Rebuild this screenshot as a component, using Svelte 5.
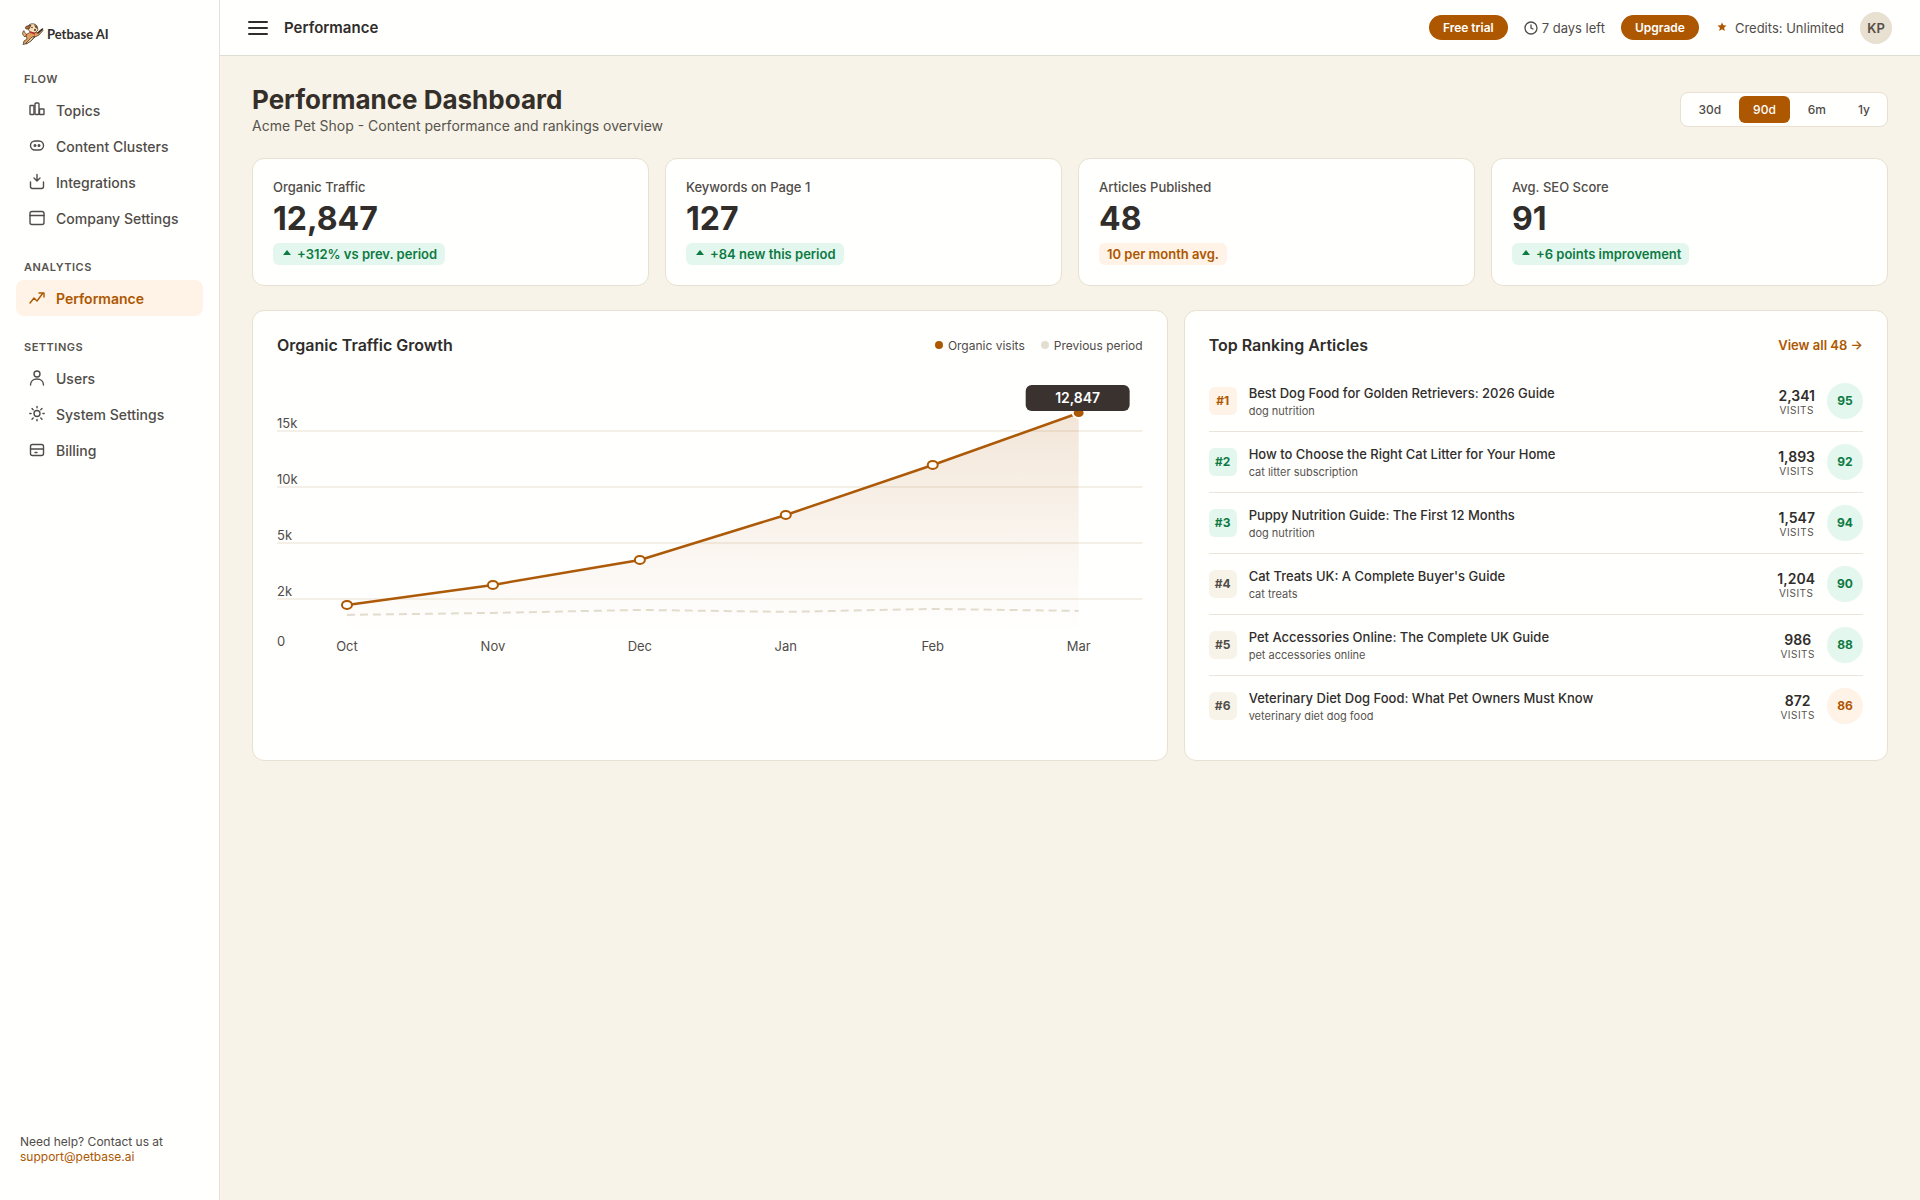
<script>
  let range = '90d';

  const ranges = ['30d', '90d', '6m', '1y'];

  const sections = [
    {
      title: 'FLOW',
      items: [
        { label: 'Topics', icon: 'topics' },
        { label: 'Content Clusters', icon: 'clusters' },
        { label: 'Integrations', icon: 'integrations' },
        { label: 'Company Settings', icon: 'company' }
      ]
    },
    {
      title: 'ANALYTICS',
      items: [{ label: 'Performance', icon: 'performance', active: true }]
    },
    {
      title: 'SETTINGS',
      items: [
        { label: 'Users', icon: 'users' },
        { label: 'System Settings', icon: 'system' },
        { label: 'Billing', icon: 'billing' }
      ]
    }
  ];

  const stats = [
    { label: 'Organic Traffic', value: '12,847', note: '+312% vs prev. period', up: true },
    { label: 'Keywords on Page 1', value: '127', note: '+84 new this period', up: true },
    { label: 'Articles Published', value: '48', note: '10 per month avg.', up: false },
    { label: 'Avg. SEO Score', value: '91', note: '+6 points improvement', up: true }
  ];

  const articles = [
    { title: 'Best Dog Food for Golden Retrievers: 2026 Guide', keyword: 'dog nutrition', visits: '2,341', score: 95, tone: 'orange' },
    { title: 'How to Choose the Right Cat Litter for Your Home', keyword: 'cat litter subscription', visits: '1,893', score: 92, tone: 'green' },
    { title: 'Puppy Nutrition Guide: The First 12 Months', keyword: 'dog nutrition', visits: '1,547', score: 94, tone: 'green' },
    { title: "Cat Treats UK: A Complete Buyer's Guide", keyword: 'cat treats', visits: '1,204', score: 90, tone: 'sand' },
    { title: 'Pet Accessories Online: The Complete UK Guide', keyword: 'pet accessories online', visits: '986', score: 88, tone: 'sand' },
    { title: 'Veterinary Diet Dog Food: What Pet Owners Must Know', keyword: 'veterinary diet dog food', visits: '872', score: 86, tone: 'sand' }
  ];

  const grid = [
    { label: '15k', y: 60 },
    { label: '10k', y: 116 },
    { label: '5k', y: 172 },
    { label: '2k', y: 228 }
  ];

  const points = [
    { month: 'Oct', x: 70, y: 234, prev: 244 },
    { month: 'Nov', x: 216, y: 214, prev: 242 },
    { month: 'Dec', x: 363, y: 189, prev: 239 },
    { month: 'Jan', x: 509, y: 144, prev: 241 },
    { month: 'Feb', x: 656, y: 94, prev: 238 },
    { month: 'Mar', x: 802, y: 42, prev: 240 }
  ];

  const line = points.map((p) => `${p.x},${p.y}`).join(' ');
  const prevLine = points.map((p) => `${p.x},${p.prev}`).join(' ');
  const area = `70,262 ${line} 802,262`;
</script>

<div class="app">
  <aside class="sidebar">
    <a class="logo" href="#home">
      <svg width="22" height="22" viewBox="0 0 22 22" stroke-width="0.7" stroke-linejoin="round" aria-hidden="true">
        <path d="M3 14C0 12 0 9 2 7.500 2.500 9 3 10.500 5 11.500z" fill="#e8ab66" stroke="#3c2a20" />
        <path d="M4 12C6 10 9 9 12 8L15 10 20 6 21 7.500 17 12 13 14 10 17 5 20.500 1 21.500 2 18 5 16z" fill="#e2a05c" stroke="#3c2a20" />
        <path d="M10 14 13 13 9 18 4 21 4 20z" fill="#f5dcb4" stroke="#3c2a20" />
        <path d="M16 10 20.500 6" stroke="#3c2a20" stroke-width="1.6" stroke-linecap="round" />
        <path d="M6 3C8 0 13 0 15 3L16 7 13 10 8 9 6 6z" fill="#f7deb6" stroke="#3c2a20" />
        <path d="M6 3C3 3 3 5 4 6L7 6 9 2z" fill="#b56b33" stroke="#3c2a20" />
        <path d="M12 1.500 15 3 16 6 13.500 5z" fill="#7d4a2b" />
        <path d="M8 9 13 11" stroke="#c62f2a" stroke-width="1.5" />
        <circle cx="10" cy="4.500" r="0.7" fill="#2d2420" />
        <circle cx="13" cy="7" r="0.9" fill="#2d2420" />
      </svg>
      <span>Petbase AI</span>
    </a>

    <nav>
      {#each sections as section}
        <section class="nav-section">
          <h2>{section.title}</h2>
          {#each section.items as item}
            <a class="nav-item" class:active={item.active} href="#{item.icon}">
              <svg width="18" height="18" viewBox="0 0 18 18" fill="none" stroke="currentColor" stroke-width="1.4" stroke-linecap="round" stroke-linejoin="round" aria-hidden="true">
                {#if item.icon === 'topics'}
                  <rect x="2" y="4.500" width="4" height="9" rx="0.5" />
                  <rect x="7" y="2" width="4" height="11.500" rx="1" />
                  <rect x="11.500" y="8" width="4.500" height="5.500" rx="0.5" />
                {:else if item.icon === 'clusters'}
                  <rect x="2.500" y="4" width="13" height="9" rx="4.500" />
                  <circle cx="7" cy="8.500" r="0.8" fill="currentColor" />
                  <circle cx="11" cy="8.500" r="0.8" fill="currentColor" />
                {:else if item.icon === 'integrations'}
                  <path d="M2.500 9v4.500a2 2 0 0 0 2 2h9a2 2 0 0 0 2-2V9M9 1.500v6M6 5l3 3 3-3" />
                {:else if item.icon === 'company'}
                  <rect x="2" y="2.500" width="14" height="13" rx="2" />
                  <path d="M2 6.500h14" />
                {:else if item.icon === 'performance'}
                  <path d="M2 14l4-5 3 3 6-8M11 4h5v4" />
                {:else if item.icon === 'users'}
                  <circle cx="9" cy="5" r="3" />
                  <path d="M2.500 16c0-4 3-6 6.500-6s6.500 2 6.500 6" />
                {:else if item.icon === 'system'}
                  <circle cx="9" cy="8.500" r="3" />
                  <path d="M9 1.500v1.300M9 14.500v1.300M1.800 8.500h1.300M14.900 8.500h1.300M4 3.500l1.200 1.200M12.800 13l1.200 1.200M14 3.500l-1.200 1.200M5.200 13L4 14.200" />
                {:else}
                  <rect x="2.500" y="3.500" width="13" height="11" rx="2" />
                  <path d="M2.500 8h13M7 11.500h2" />
                {/if}
              </svg>
              <span>{item.label}</span>
            </a>
          {/each}
        </section>
      {/each}
    </nav>

    <p class="help">
      Need help? Contact us at<br />
      <a href="mailto:support@petbase.ai">support@petbase.ai</a>
    </p>
  </aside>

  <div class="main">
    <header class="topbar">
      <button class="menu" aria-label="Toggle menu">
        <svg width="20" height="20" viewBox="0 0 20 20" stroke="currentColor" stroke-width="2" stroke-linecap="round">
          <path d="M1 4h18M1 10h18M1 16h18" />
        </svg>
      </button>
      <span class="page-name">Performance</span>
      <div class="account">
        <span class="pill">Free trial</span>
        <span class="meta">
          <svg width="14" height="14" viewBox="0 0 14 14" fill="none" stroke="currentColor" stroke-width="1.3" stroke-linecap="round" aria-hidden="true">
            <circle cx="7" cy="7" r="6" />
            <path d="M7 4v3l2 1" />
          </svg>
          7 days left
        </span>
        <button class="pill">Upgrade</button>
        <span class="meta">
          <svg width="16" height="16" viewBox="0 0 16 16" fill="#ad5700" aria-hidden="true">
            <path d="M7 2.500l1.300 2.700 3.200.3-2.400 2.200.7 3.300L7 9.300 4.200 11l.7-3.300-2.400-2.200 3.200-.3z" />
          </svg>
          Credits: Unlimited
        </span>
        <button class="avatar">KP</button>
      </div>
    </header>

    <main class="content">
      <div class="heading">
        <div>
          <h1>Performance Dashboard</h1>
          <p>Acme Pet Shop - Content performance and rankings overview</p>
        </div>
        <div class="ranges">
          {#each ranges as r}
            <button class:selected={range === r} on:click={() => (range = r)}>{r}</button>
          {/each}
        </div>
      </div>

      <div class="stats">
        {#each stats as stat}
          <div class="card stat">
            <span class="stat-label">{stat.label}</span>
            <strong>{stat.value}</strong>
            <span class="note" class:up={stat.up}>
              {#if stat.up}
                <svg width="14" height="12" viewBox="0 0 14 12" fill="currentColor" aria-hidden="true">
                  <path d="M6 2l4 5H2z" />
                </svg>
              {/if}
              {stat.note}
            </span>
          </div>
        {/each}
      </div>

      <div class="panels">
        <section class="card panel">
          <div class="panel-head">
            <h3>Organic Traffic Growth</h3>
            <div class="legend">
              <span><i class="dot"></i>Organic visits</span>
              <span><i class="dot prev"></i>Previous period</span>
            </div>
          </div>
          <svg class="chart" viewBox="0 0 866 300" role="img" aria-label="Organic traffic by month">
            <defs>
              <linearGradient id="fill" x1="0" y1="0" x2="0" y2="1">
                <stop offset="0" stop-color="#ad5700" stop-opacity="0.15" />
                <stop offset="1" stop-color="#ad5700" stop-opacity="0" />
              </linearGradient>
            </defs>
            {#each grid as g}
              <line x1="0" x2="866" y1={g.y} y2={g.y} class="gridline" />
              <text x="0" y={g.y - 3}>{g.label}</text>
            {/each}
            <text x="0" y="275">0</text>
            <polygon points={area} fill="url(#fill)" />
            <polyline points={prevLine} class="prev-line" />
            <polyline points={line} class="visits-line" />
            {#each points as p, i}
              {#if i < points.length - 1}
                <ellipse cx={p.x} cy={p.y} rx="5" ry="4" class="point" />
              {:else}
                <ellipse cx={p.x} cy={p.y} rx="6" ry="5" class="point last" />
              {/if}
              <text x={p.x} y="280" text-anchor="middle">{p.month}</text>
            {/each}
            <rect x="749" y="14" width="104" height="26" rx="6" fill="#3a322f" />
            <text x="801" y="32" text-anchor="middle" class="tip">12,847</text>
          </svg>
        </section>

        <section class="card panel">
          <div class="panel-head">
            <h3>Top Ranking Articles</h3>
            <a class="view-all" href="#articles">View all 48 →</a>
          </div>
          <ol class="articles">
            {#each articles as article, i}
              <li>
                <span class="rank {article.tone}">#{i + 1}</span>
                <div class="article">
                  <span class="article-title">{article.title}</span>
                  <span class="keyword">{article.keyword}</span>
                </div>
                <div class="visits">
                  <strong>{article.visits}</strong>
                  <span>VISITS</span>
                </div>
                <span class="score" class:fair={article.score < 88}>{article.score}</span>
              </li>
            {/each}
          </ol>
        </section>
      </div>
    </main>
  </div>
</div>

<style>
  :global(body) {
    background: #f8f3e8;
  }

  .app {
    display: flex;
    min-height: 100vh;
    font-family: Inter, "Liberation Sans", sans-serif;
    color: #302d2b;
  }

  .app * {
    box-sizing: border-box;
  }

  h1, h2, h3, p, ol {
    margin: 0;
    padding: 0;
  }

  a {
    color: inherit;
    text-decoration: none;
  }

  button {
    border: none;
    background: none;
    padding: 0;
    font: inherit;
    color: inherit;
    cursor: pointer;
  }

  svg {
    display: block;
    flex-shrink: 0;
  }

  .sidebar {
    display: flex;
    flex-direction: column;
    width: 220px;
    flex-shrink: 0;
    padding: 22px 16px 36px;
    background: #fffffe;
    border-right: 1px solid #e6e2d8;
  }

  .logo {
    display: flex;
    align-items: center;
    gap: 3px;
    height: 24px;
    margin-bottom: 24px;
    padding-left: 6px;
    font-family: Lato, sans-serif;
    font-size: 13px;
    font-weight: 700;
  }

  .nav-section {
    margin-bottom: 22px;
  }

  .nav-section h2 {
    padding-left: 8px;
    margin-bottom: 4px;
    font-size: 11px;
    line-height: 18px;
    font-weight: 600;
    letter-spacing: 0.5px;
    color: #57534e;
  }

  .nav-item {
    display: flex;
    align-items: center;
    gap: 10px;
    height: 36px;
    padding: 0 12px;
    border-radius: 8px;
    font-size: 14px;
    font-weight: 500;
    color: #504c48;
  }

  .nav-item.active {
    background: #fff2e6;
    color: #ad5700;
    font-weight: 600;
  }

  .help {
    margin-top: auto;
    padding-left: 4px;
    font-size: 12px;
    line-height: 15px;
    color: #504c48;
  }

  .help a {
    color: #ad5700;
  }

  .main {
    flex: 1;
    min-width: 0;
  }

  .topbar {
    display: flex;
    align-items: center;
    gap: 16px;
    height: 56px;
    padding: 0 28px;
    background: #fffffe;
    border-bottom: 1px solid #dfddd3;
  }

  .page-name {
    font-size: 15px;
    font-weight: 600;
  }

  .account {
    display: flex;
    align-items: center;
    gap: 16px;
    margin-left: auto;
  }

  .pill {
    padding: 0 14px;
    border-radius: 13px;
    background: #ad5700;
    color: #fff;
    font-size: 12px;
    line-height: 25px;
    font-weight: 600;
  }

  .meta {
    display: flex;
    align-items: center;
    gap: 4px;
    font-size: 13px;
    color: #504c48;
  }

  .avatar {
    width: 32px;
    height: 32px;
    border-radius: 50%;
    background: #e8e0d0;
    font-size: 13px;
    font-weight: 600;
    color: #57504a;
  }

  .content {
    padding: 28px 32px;
  }

  .heading {
    display: flex;
    align-items: center;
    justify-content: space-between;
    margin-bottom: 24px;
  }

  h1 {
    font-size: 26px;
    line-height: 32px;
    font-weight: 700;
    color: #352f2a;
  }

  .heading p {
    padding-top: 2px;
    font-size: 14px;
    line-height: 16px;
    color: #57534e;
  }

  .ranges {
    display: flex;
    gap: 4px;
    padding: 3px;
    background: #fffffe;
    border: 1px solid #e8e0d0;
    border-radius: 8px;
  }

  .ranges button {
    padding: 0 14px;
    border-radius: 6px;
    font-size: 12px;
    line-height: 27px;
    font-weight: 500;
    color: #504c48;
  }

  .ranges .selected {
    background: #ad5700;
    color: #fff;
  }

  .card {
    background: #fffffe;
    border: 1px solid #e8e0d0;
    border-radius: 12px;
  }

  .stats {
    display: grid;
    grid-template-columns: repeat(4, 1fr);
    gap: 16px;
    margin-bottom: 24px;
  }

  .stat {
    display: flex;
    flex-direction: column;
    align-items: flex-start;
    padding: 20px;
  }

  .stat-label {
    font-size: 13px;
    line-height: 16px;
    font-weight: 500;
    color: #504c48;
  }

  .stat strong {
    margin: 4px 0;
    font-size: 32px;
    line-height: 40px;
    font-weight: 700;
  }

  .note {
    display: flex;
    align-items: center;
    gap: 2px;
    padding: 0 8px;
    border-radius: 6px;
    background: #fff2e6;
    color: #ad5700;
    font-size: 13px;
    line-height: 22px;
    font-weight: 600;
  }

  .note.up {
    background: #e4f7ee;
    color: #0e7a43;
  }

  .panels {
    display: grid;
    grid-template-columns: 13fr 10fr;
    gap: 16px;
  }

  .panel {
    min-width: 0;
    padding: 24px;
  }

  .panel-head {
    display: flex;
    align-items: center;
    justify-content: space-between;
    height: 20px;
    margin-bottom: 16px;
  }

  h3 {
    font-size: 16px;
    font-weight: 600;
  }

  .legend {
    display: flex;
    gap: 16px;
    font-size: 12px;
    color: #504c48;
  }

  .legend span {
    display: flex;
    align-items: center;
    gap: 5px;
  }

  .dot {
    width: 8px;
    height: 8px;
    border-radius: 50%;
    background: #ad5700;
  }

  .dot.prev {
    background: #e3dfd0;
  }

  .chart {
    width: 100%;
  }

  .chart text {
    font-size: 13px;
    fill: #504c48;
  }

  .chart .tip {
    font-size: 14px;
    font-weight: 600;
    fill: #fff;
  }

  .gridline {
    stroke: #f0ebe0;
    stroke-width: 1.5;
  }

  .visits-line {
    fill: none;
    stroke: #ad5a08;
    stroke-width: 2.5;
  }

  .prev-line {
    fill: none;
    stroke: #e3dccd;
    stroke-width: 2;
    stroke-dasharray: 8 5;
  }

  .point {
    fill: #fff;
    stroke: #ad5700;
    stroke-width: 2;
  }

  .point.last {
    fill: #ad5700;
    stroke: #fff;
  }

  .view-all {
    font-size: 13px;
    font-weight: 600;
    color: #ad5700;
  }

  .articles {
    list-style: none;
  }

  .articles li {
    display: flex;
    align-items: center;
    gap: 12px;
    padding: 12px 0;
    border-bottom: 1px solid #eae5d8;
  }

  .articles li:last-child {
    border-bottom: none;
  }

  .rank {
    width: 28px;
    border-radius: 6px;
    text-align: center;
    font-size: 12px;
    line-height: 28px;
    font-weight: 700;
  }

  .rank.orange {
    background: #fff2e6;
    color: #ad5700;
  }

  .rank.green {
    background: #e4f7ee;
    color: #0e7a43;
  }

  .rank.sand {
    background: #f8f3e8;
    color: #504c48;
  }

  .article {
    display: flex;
    flex-direction: column;
    gap: 2px;
    flex: 1;
    min-width: 0;
  }

  .article-title {
    font-size: 13px;
    line-height: 18px;
    font-weight: 500;
  }

  .keyword {
    font-size: 11px;
    line-height: 14px;
    color: #57534e;
  }

  .visits {
    display: flex;
    flex-direction: column;
    align-items: center;
    padding-top: 2px;
  }

  .visits strong {
    font-size: 14px;
    line-height: 16px;
    font-weight: 600;
  }

  .visits span {
    font-size: 10px;
    line-height: 12px;
    letter-spacing: 0.5px;
    color: #57534e;
  }

  .score {
    width: 36px;
    border-radius: 50%;
    background: #e4f7ee;
    color: #0e7a43;
    text-align: center;
    font-size: 12px;
    line-height: 36px;
    font-weight: 700;
  }

  .score.fair {
    background: #fff2e6;
    color: #ad5700;
  }
</style>
